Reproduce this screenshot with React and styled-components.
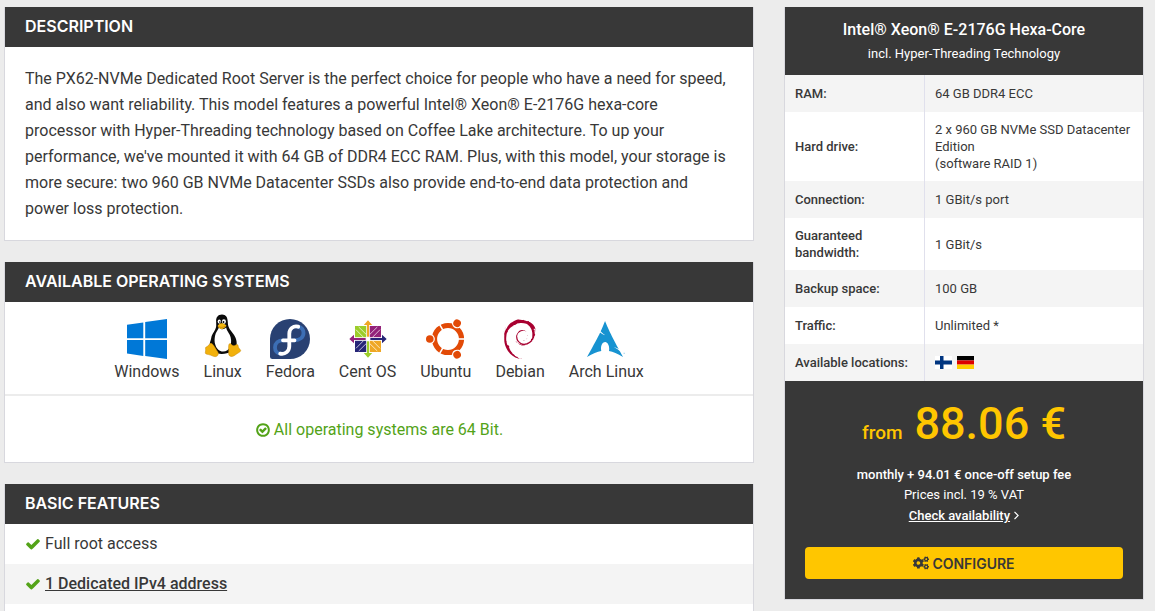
import React from 'react'
import styled, { createGlobalStyle } from 'styled-components'
import { FaCogs } from 'react-icons/fa'
import { SiDebian, SiArchlinux } from 'react-icons/si'

const GlobalStyle = createGlobalStyle`
    * { box-sizing: border-box; }
    body {
        margin: 0;
        background: #ececec;
        color: #383838;
        font-family: Roboto, "Liberation Sans", sans-serif;
        font-size: 16px;
        line-height: 24px;
    }
    h1, h2, p, ul { margin: 0; padding: 0; }
    ul { list-style: none; }
`
const Page = styled.main`
    display: grid;
    grid-template-columns: minmax(0, 1fr) 360px;
    gap: 30px;
    align-items: start;
    padding: 7px 11px 0 4px;
    @media( max-width: 800px ) {
        grid-template-columns: minmax(0, 1fr);
    }
`
const Column = styled.div`
    display: flex;
    flex-direction: column;
    gap: 21px;
`
const Panel = styled.section`
    background: #fff;
    border: 1px solid #d8d8de;
    border-top: 0;
`
const PanelTitle = styled.h2`
    padding: 7px 20px 9px;
    background: #383838;
    color: #fff;
    font-family: Inter, "Liberation Sans", sans-serif;
    font-size: 16px;
    font-weight: 600;
    line-height: 24px;
    text-transform: uppercase;
`
const Description = styled.p`
    padding: 19px 20px 18px;
    line-height: 26px;
`
const SystemList = styled.ul`
    display: flex;
    flex-wrap: wrap;
    justify-content: center;
    gap: 24px;
    padding: 12px 20px 10px;
    border-bottom: 2px solid #ececec;
`
const System = styled.li`
    display: flex;
    flex-direction: column;
    align-items: center;
    gap: 1px;
`
const Logo = styled.span`
    display: flex;
    align-items: flex-end;
    height: 45px;
    svg {
        display: block;
        overflow: visible;
        margin-bottom: ${props => props.$lift || 0}px;
    }
`
const Note = styled.p`
    display: flex;
    justify-content: center;
    align-items: center;
    gap: 3px;
    padding: 22px 20px 20px;
    color: #53a318;
`
const FeatureList = styled.ul`
    && { padding-bottom: 20px; }
`
const Feature = styled.li`
    display: flex;
    align-items: center;
    gap: 4px;
    padding: 8px 20px;
    &:nth-child(even) { background: #f4f4f4; }
    svg { color: #53a318; }
`
const TextLink = styled.a`
    color: inherit;
    font-weight: 500;
    text-decoration: underline;
`
const OfferHead = styled.header`
    padding: 11px 20px 9px;
    background: #383838;
    color: #fff;
    text-align: center;
`
const OfferTitle = styled.h1`
    font-size: 16px;
    font-weight: 500;
    line-height: 24px;
`
const Small = styled.p`
    font-size: 13px;
    font-weight: ${props => (props.$strong ? 500 : 400)};
    line-height: ${props => props.$line || 24}px;
`
const SpecTable = styled.table`
    width: 100%;
    border-collapse: separate;
    border-spacing: 0;
    table-layout: fixed;
    font-size: 13px;
    line-height: 17px;
    text-align: left;
    tr { height: 37px; }
    tr:nth-child(odd) { background: #f4f4f4; }
    th, td { padding: 9px 10px; }
    th {
        width: 140px;
        border-right: 1px solid #e0e0ec;
        font-weight: 500;
    }
`
const Flags = styled.span`
    display: flex;
    gap: 5px;
`
const Checkout = styled.footer`
    padding: 13px 20px 20px;
    background: #383838;
    color: #fff;
    text-align: center;
`
const Price = styled.p`
    display: flex;
    justify-content: center;
    align-items: baseline;
    gap: 12px;
    && { margin-bottom: 2px; }
    color: #ffc600;
    font-size: 19px;
    font-weight: 500;
    line-height: 60px;
`
const Amount = styled.span`
    font-size: 45px;
`
const Configure = styled.button`
    display: flex;
    justify-content: center;
    align-items: center;
    gap: 3px;
    width: 100%;
    height: 32px;
    margin-top: 20px;
    border: 0;
    border-radius: 4px;
    background: #ffc600;
    color: #383838;
    font-family: Inter, "Liberation Sans", sans-serif;
    font-size: 14px;
    font-weight: 600;
    text-transform: uppercase;
    cursor: pointer;
`

const Check = () => (
    <svg width="16" height="16" viewBox="0 0 1792 1792" fill="currentColor" aria-hidden="true">
        <path d="M1671 566q0 40-28 68l-724 724-136 136q-28 28-68 28t-68-28l-136-136-362-362q-28-28-28-68t28-68l136-136q28-28 68-28t68 28l294 295 656-657q28-28 68-28t68 28l136 136q28 28 28 68z" />
    </svg>
)

const CheckCircle = () => (
    <svg width="16" height="16" viewBox="0 0 1792 1792" fill="currentColor" aria-hidden="true">
        <path d="M1299 813l-422 422q-19 19-45 19t-45-19l-294-294q-19-19-19-45t19-45l102-102q19-19 45-19t45 19l147 147 275-275q19-19 45-19t45 19l102 102q19 19 19 45t-19 45zm141 83q0-148-73-273t-198-198-273-73-273 73-198 198-73 273 73 273 198 198 273 73 273-73 198-198 73-273zm224 0q0 209-103 385.5t-279.5 279.5-385.5 103-385.5-103-279.5-279.5-103-385.5 103-385.5 279.5-279.5 385.5-103 385.5 103 279.5 279.5 103 385.5z" />
    </svg>
)

const AngleRight = () => (
    <svg width="6" height="9" viewBox="0 0 6 9" fill="none" stroke="currentColor" strokeWidth="1.2" aria-hidden="true">
        <path d="M1.500 .8l3.600 3.700L1.500 8.200" />
    </svg>
)

const WindowsLogo = () => (
    <svg width="40" height="40" viewBox="0 0 40 40" fill="#0078d7" aria-hidden="true">
        <path d="M0 5.7l16.3-2.3v15.9H0zM18.2 3.1L40 0v19.2H18.2zM0 21.1h16.3v15.8L0 34.6zM18.2 21.1H40V40l-21.8-3z" />
    </svg>
)

const LinuxLogo = () => (
    <svg width="36" height="43" viewBox="0 0 36 43" aria-hidden="true">
        <path fill="#0b0b0b" d="M17 .4c-4 0-6 2.8-5.9 6.6.1 4 .5 6.1-1 8.8-1.700 3-3.600 5.300-4 8.700-.4 2.300-1.600 4-1.300 6.300.6 5 5.600 9.200 12 9.200 6.800 0 14.800-3.500 14.900-10.500.1-5.500-3-9-5.400-12.200-2.700-3.600-3.300-5.300-3.500-9.300C22.600 3.200 21 .4 17 .4z" />
        <path fill="#fff" d="M14 13.500c-1.200 2.500-3.400 5-4 8.500-.5 3-.8 6 .4 9 1.300 4 4 6.500 7.600 6.500 3.300 0 6-2 7.300-5.300 1.500-4 .9-8.200-.6-11.400-1-2.200-2.900-4.200-3.600-7.300-2 2-5 2.600-7.100 0z" />
        <ellipse cx="14.300" cy="7.600" rx="1.600" ry="2.100" fill="#fff" />
        <ellipse cx="18.900" cy="7.600" rx="2" ry="2.300" fill="#fff" />
        <circle cx="14.800" cy="8" r=".8" />
        <circle cx="18.500" cy="8" r=".9" />
        <path fill="#f5b90f" d="M16.600 9.300c1.700 0 4.700 1.500 4.700 2.500s-3.100 3.300-4.900 3.300c-1.500 0-3.700-1.900-3.700-3s2.200-2.800 3.900-2.800z" />
        <path fill="none" stroke="#a86f08" strokeWidth=".6" d="M13.300 12.300c2 1.600 4 1.500 7.600-.2" />
        <path fill="#f2b10c" stroke="#c58606" strokeWidth=".5" d="M6 29.300c2.200.3 4.600 5.500 6.600 8.300 1.400 2 .5 4.600-1.700 5-2.500.4-4.400-1.500-7.300-2-2.200-.4-3.300-.7-3.300-1.900 0-1.100.6-2 .3-3.400-.3-1.500-.2-2.200 1.200-2.600 2.200-.6 2.400-3.500 4.200-3.400z" />
        <path fill="#f2b10c" stroke="#c58606" strokeWidth=".5" d="M25.100 29.600c1 0 1.700 2.100 3.600 2.100 2 0 2.200-1.400 3.500-1.200 1.300.3.700 2.200 1.600 3.500.8 1.300 1.900 1.500 1.900 2.600 0 1.300-2.500 2.200-4.400 3.600-1.700 1.200-3.300 2.600-5.300 2.200-2.200-.4-2.600-2.200-2.300-4.700.2-2.400-.9-8.100 1.400-8.100z" />
    </svg>
)

const FedoraLogo = () => (
    <svg width="40" height="40" viewBox="0 0 40 40" fill="none" strokeWidth="3.800" strokeLinecap="round" aria-hidden="true">
        <path fill="#294172" d="M20 0a20 20 0 1 1 0 40H2.500A2.500 2.500 0 0 1 0 37.500V20A20 20 0 0 1 20 0z" />
        <path stroke="#3c6eb4" d="M24.500 21.300c5 0 9-2.800 9-7.300 0-3.600-2.200-6-5.500-6M13 21.300c-4.500 0-8 2.800-8 7.200 0 3.600 2.200 6 5.200 6.200" />
        <path stroke="#fff" d="M28.200 7.700c-5-1.200-8.900 2-8.900 7v12.600c0 4.700-3.900 8.400-9.100 7.300M13 21.300h11.500" />
    </svg>
)

// The four coloured quadrants are the same shape turned by 90 degrees
const CentosLogo = () => (
    <svg width="38" height="38" viewBox="-19 -19 38 38" aria-hidden="true">
        {[['#932279', '#efa724', 0], ['#efa724', '#262577', 90], ['#262577', '#9ccd2a', 180], ['#9ccd2a', '#932279', 270]].map(([square, arrow, turn]) => (
            <g key={turn} transform={`rotate(${turn})`}>
                <path fill={square} d="M1.800 -13H13V-1.800H1.800z" />
                <path fill="none" stroke="#fff" strokeWidth=".7" d="M2 -4.800L9.300 -12M4.800 -2L12 -9.300" />
                <path fill={arrow} d="M0 -18.700L4.200 -14H1.100V-3L0 -1.500L-1.100 -3V-14H-4.200z" />
            </g>
        ))}
        <circle r="2" fill="#fff" />
    </svg>
)

const UbuntuLogo = () => (
    <svg width="40" height="40" viewBox="0 0 40 40" aria-hidden="true">
        <circle cx="22" cy="20" r="13.500" fill="none" stroke="#e24a07" strokeWidth="5.200" />
        {[0, 120, 240].map(turn => (
            <g key={turn} transform={`rotate(${turn} 22 20)`}>
                <path stroke="#fff" strokeWidth="1.600" d="M32 20H40" />
                <circle cx="3.800" cy="20" r="5.100" fill="#fff" />
                <circle cx="3.800" cy="20" r="3.800" fill="#e24a07" />
            </g>
        ))}
    </svg>
)

const FlagFinland = () => (
    <svg width="17" height="13" viewBox="0 0 17 13" role="img" aria-label="Finland">
        <path fill="#fff" d="M0 0h17v13H0z" />
        <path fill="#003580" d="M5 0h3.500v4.500H17v4H8.500V13H5V8.500H0v-4h5z" />
    </svg>
)

const FlagGermany = () => (
    <svg width="17" height="13" viewBox="0 0 17 13" role="img" aria-label="Germany">
        <path d="M0 0h17v4.400H0z" />
        <path fill="#d00" d="M0 4.400h17v4.200H0z" />
        <path fill="#ffce00" d="M0 8.600h17V13H0z" />
    </svg>
)

const systems = [
    { name: 'Windows', logo: <WindowsLogo /> },
    { name: 'Linux', logo: <LinuxLogo />, lift: 2 },
    { name: 'Fedora', logo: <FedoraLogo /> },
    { name: 'Cent OS', logo: <CentosLogo />, lift: 1 },
    { name: 'Ubuntu', logo: <UbuntuLogo /> },
    { name: 'Debian', logo: <SiDebian size={40} color="#a80030" /> },
    { name: 'Arch Linux', logo: <SiArchlinux size={38} color="#1793d1" />, lift: 1 },
]

const specs = [
    ['RAM:', '64 GB DDR4 ECC'],
    ['Hard drive:', <>2 x 960 GB NVMe SSD Datacenter Edition<br />(software RAID 1)</>],
    ['Connection:', '1 GBit/s port'],
    ['Guaranteed bandwidth:', '1 GBit/s'],
    ['Backup space:', '100 GB'],
    ['Traffic:', 'Unlimited *'],
    ['Available locations:', <Flags><FlagFinland /><FlagGermany /></Flags>],
]

const App = () => (
    <Page>
        <GlobalStyle />
        <Column>
            <Panel>
                <PanelTitle>Description</PanelTitle>
                <Description>The PX62-NVMe Dedicated Root Server is the perfect choice for people who have a need for speed, and also want reliability. This model features a powerful Intel® Xeon® E-2176G hexa-core processor with Hyper-Threading technology based on Coffee Lake architecture. To up your performance, we've mounted it with 64 GB of DDR4 ECC RAM. Plus, with this model, your storage is more secure: two 960 GB NVMe Datacenter SSDs also provide end-to-end data protection and power loss protection.
                </Description>
            </Panel>
            <Panel>
                <PanelTitle>Available operating systems</PanelTitle>
                <SystemList>
                    {systems.map(({ name, logo, lift }) => (
                        <System key={name}>
                            <Logo $lift={lift}>{logo}</Logo>
                            {name}
                        </System>
                    ))}
                </SystemList>
                <Note><CheckCircle />All operating systems are 64 Bit.</Note>
            </Panel>
            <Panel>
                <PanelTitle>Basic features</PanelTitle>
                <FeatureList>
                    <Feature><Check />Full root access</Feature>
                    <Feature><Check /><TextLink href="#ipv4">1 Dedicated IPv4 address</TextLink></Feature>
                </FeatureList>
            </Panel>
        </Column>
        <Panel>
            <OfferHead>
                <OfferTitle>Intel® Xeon® E-2176G Hexa-Core</OfferTitle>
                <Small>incl. Hyper-Threading Technology</Small>
            </OfferHead>
            <SpecTable>
                <tbody>
                    {specs.map(([label, value]) => (
                        <tr key={label}>
                            <th scope="row">{label}</th>
                            <td>{value}</td>
                        </tr>
                    ))}
                </tbody>
            </SpecTable>
            <Checkout>
                <Price>from <Amount>88.06 €</Amount></Price>
                <Small $strong $line={20}>monthly + 94.01 € once-off setup fee</Small>
                <Small $line={20}>Prices incl. 19 % VAT</Small>
                <Small $line={22}><TextLink href="#availability">Check availability</TextLink> <AngleRight /></Small>
                <Configure type="button"><FaCogs size={16} />Configure</Configure>
            </Checkout>
        </Panel>
    </Page>
)

export default App
